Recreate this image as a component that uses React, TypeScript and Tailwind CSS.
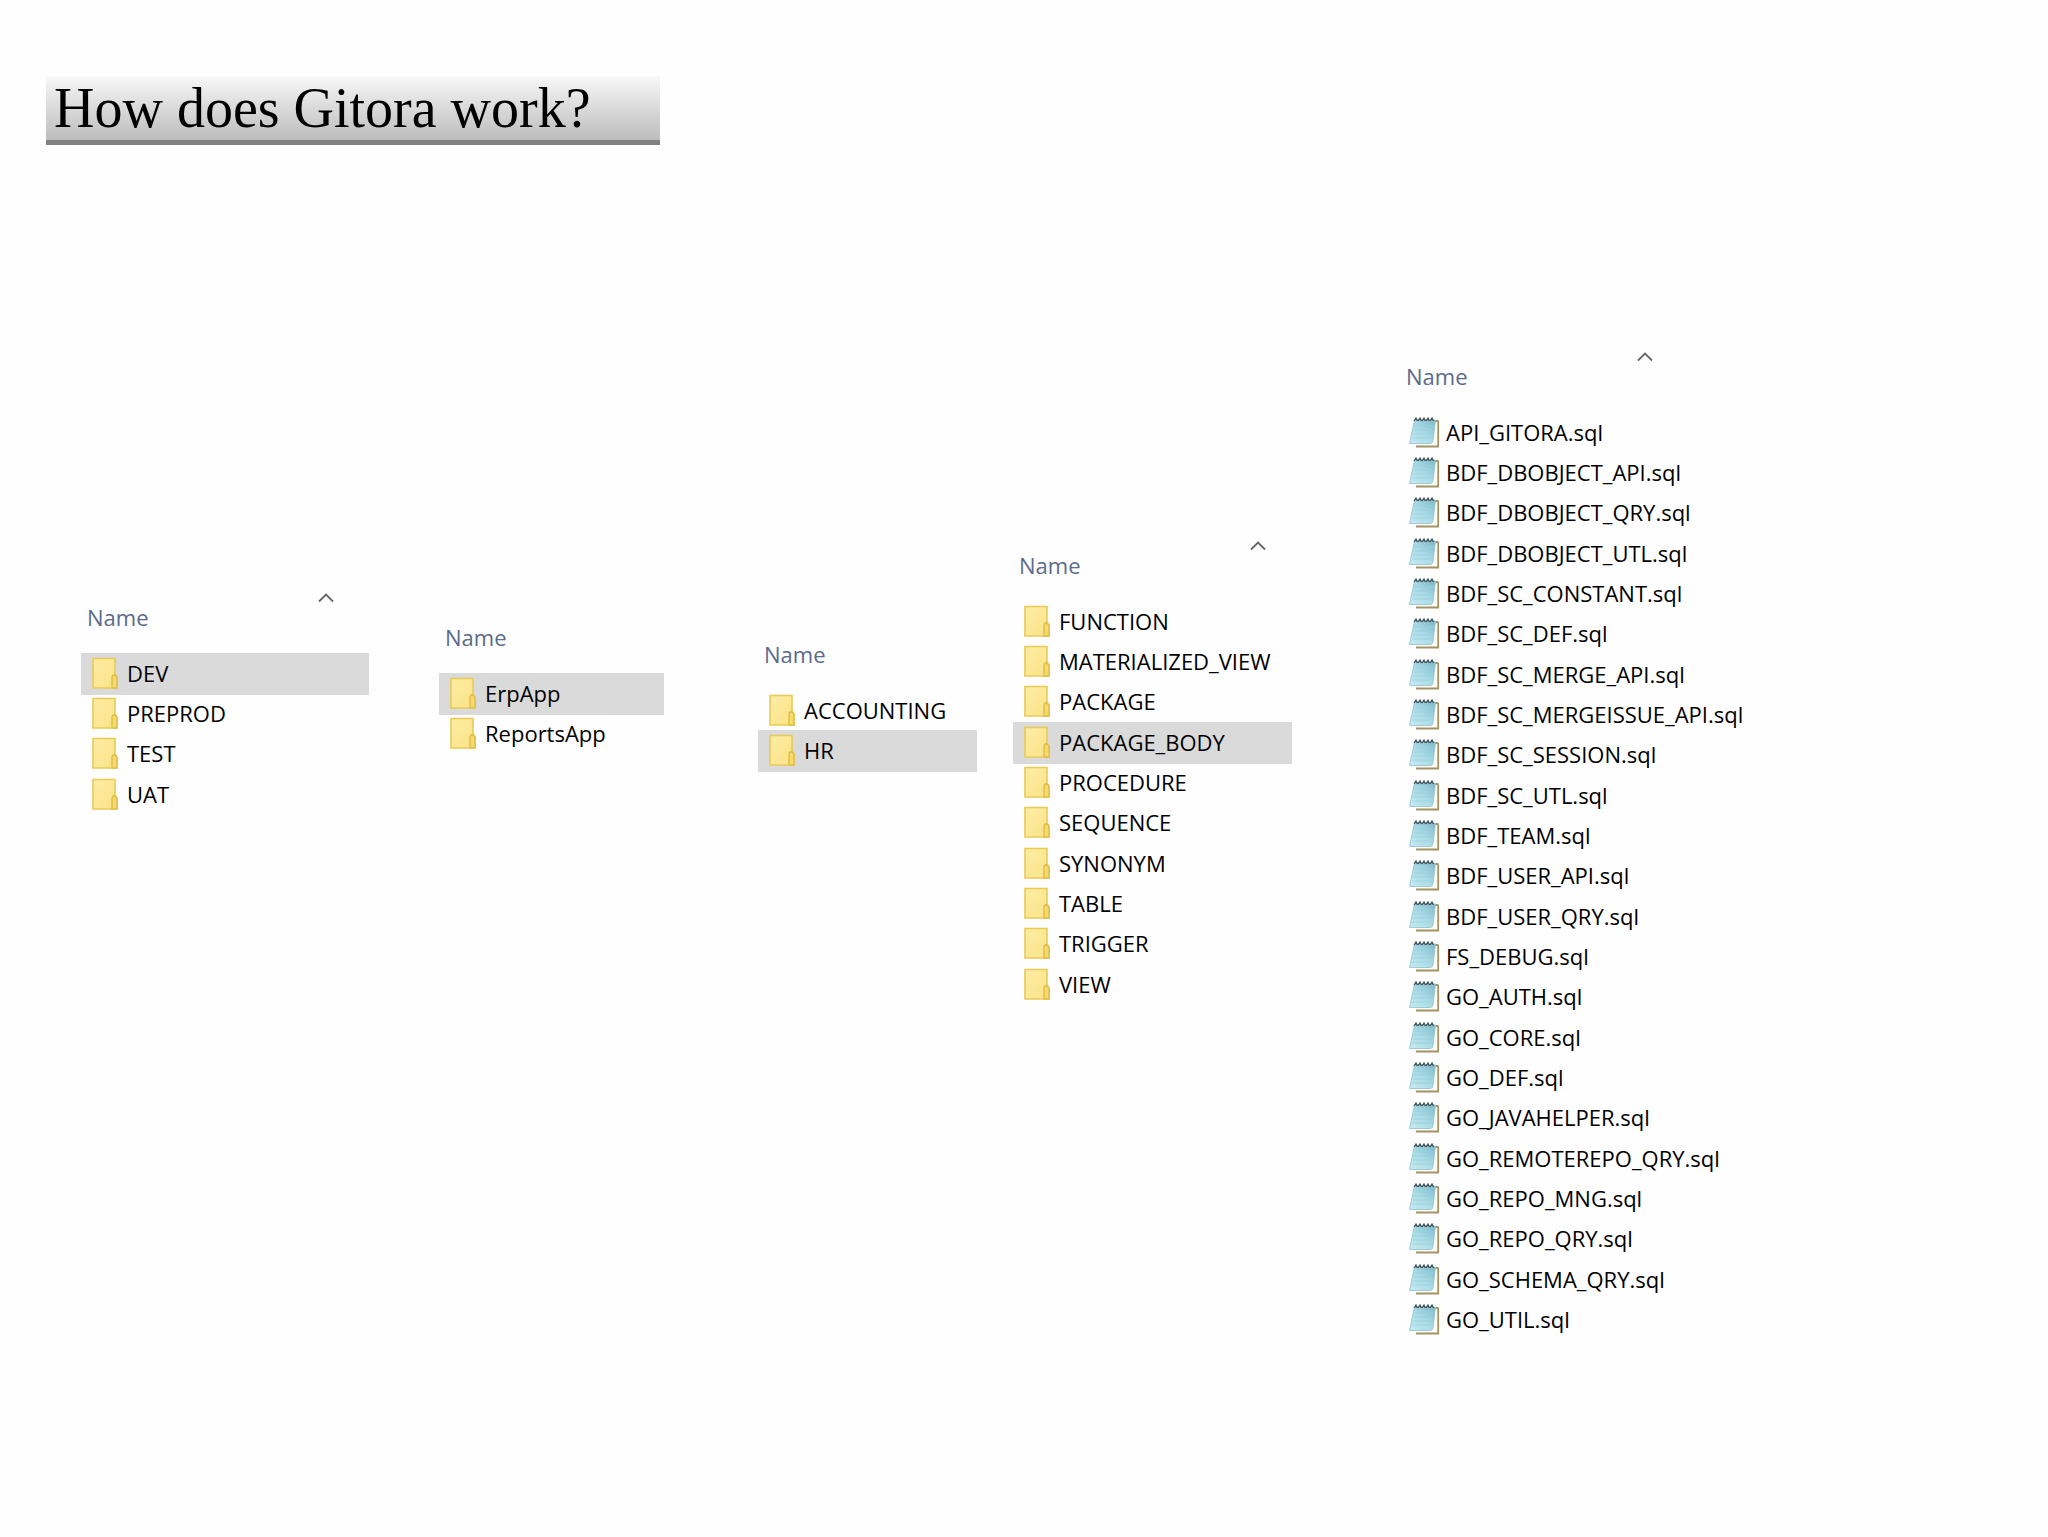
import React from "react";

type Kind = "folder" | "file";

interface PanelProps {
  items: string[];
  selected?: string;
  kind?: Kind;
  sorted?: boolean;
  className: string;
}

const environments = ["DEV", "PREPROD", "TEST", "UAT"];
const applications = ["ErpApp", "ReportsApp"];
const schemas = ["ACCOUNTING", "HR"];
const objectTypes = [
  "FUNCTION",
  "MATERIALIZED_VIEW",
  "PACKAGE",
  "PACKAGE_BODY",
  "PROCEDURE",
  "SEQUENCE",
  "SYNONYM",
  "TABLE",
  "TRIGGER",
  "VIEW",
];
const files = [
  "API_GITORA.sql",
  "BDF_DBOBJECT_API.sql",
  "BDF_DBOBJECT_QRY.sql",
  "BDF_DBOBJECT_UTL.sql",
  "BDF_SC_CONSTANT.sql",
  "BDF_SC_DEF.sql",
  "BDF_SC_MERGE_API.sql",
  "BDF_SC_MERGEISSUE_API.sql",
  "BDF_SC_SESSION.sql",
  "BDF_SC_UTL.sql",
  "BDF_TEAM.sql",
  "BDF_USER_API.sql",
  "BDF_USER_QRY.sql",
  "FS_DEBUG.sql",
  "GO_AUTH.sql",
  "GO_CORE.sql",
  "GO_DEF.sql",
  "GO_JAVAHELPER.sql",
  "GO_REMOTEREPO_QRY.sql",
  "GO_REPO_MNG.sql",
  "GO_REPO_QRY.sql",
  "GO_SCHEMA_QRY.sql",
  "GO_UTIL.sql",
];

function SharedGradients() {
  return (
    <svg className="absolute size-0" aria-hidden="true">
      <defs>
        <linearGradient id="folderFill" x1="0" y1="0" x2="1" y2="1">
          <stop offset="0" stopColor="#fdeca4" />
          <stop offset="1" stopColor="#fbe386" />
        </linearGradient>
        <linearGradient id="padFill" x1="0" y1="1" x2="1" y2="0">
          <stop offset="0" stopColor="#c8eaf1" />
          <stop offset="0.5" stopColor="#a9dbe6" />
          <stop offset="1" stopColor="#7fb9c8" />
        </linearGradient>
      </defs>
    </svg>
  );
}

function FolderIcon() {
  return (
    <svg className="h-8 w-7 shrink-0" viewBox="0 0 28 32" aria-hidden="true">
      <path d="M2 1.500h22v15.500l2 3V31H2z" fill="url(#folderFill)" stroke="#e9ca55" strokeWidth="1.600" />
      <path d="M21 31V20.500q0-2 2-3 2 1 3 3V31z" fill="#f6da6c" stroke="#dfbe48" strokeWidth="1.400" />
    </svg>
  );
}

function NotepadIcon() {
  return (
    <svg className="h-8 w-8 shrink-0" viewBox="0 0 32 32" aria-hidden="true">
      <path d="M9 5h21v25.500H8z" fill="#fdfbf2" />
      <path d="M27 5h2.500q.7 0 .7 1v24.500H8" fill="none" stroke="#a39468" strokeWidth="1.800" />
      <path d="M6.500 4H27.500L25 24.500q-.5 3-2.500 3H1.500z" fill="url(#padFill)" stroke="#8cc3cf" strokeWidth="0.800" />
      <path d="M6.500 10h18.500M6 14h18.500M5.500 18H24M4.500 22h19" stroke="#98d0dc" strokeWidth="0.800" />
      <path
        d="M6 5l2-3 1.500 3M10 5l2-3 1.500 3M14 5l2-3 1.500 3M18 5l2-3 1.500 3M22 5l2-3 1.500 3"
        fill="none"
        stroke="#42545c"
        strokeWidth="1.300"
      />
    </svg>
  );
}

function Panel({ items, selected, kind = "folder", sorted = false, className }: PanelProps) {
  return (
    <section className={`shrink-0 ${className}`}>
      <div className="relative h-14 pt-[3px]">
        <button type="button" className="block w-full pl-[6px] text-left leading-8 text-[#5b6b8c]">
          Name
        </button>
        {sorted && (
          <svg className="absolute -top-1.5 left-[237px] h-3 w-4" viewBox="0 0 16 12" fill="none" aria-hidden="true">
            <path d="M1 9.500 8 2.500l7 7" stroke="#666" strokeWidth="1.800" />
          </svg>
        )}
      </div>
      <ul>
        {items.map((name) => (
          <li key={name} className="flex h-10 items-center nth-[3n]:mb-px">
            <button
              type="button"
              aria-pressed={name === selected}
              className={`flex h-[42px] w-full shrink-0 items-center pb-0.5 text-left whitespace-nowrap text-black ${
                name === selected ? "bg-[#dadada]" : ""
              } ${kind === "folder" ? "gap-2 pl-[10px]" : "gap-[6px] pl-2"}`}
            >
              {kind === "folder" ? <FolderIcon /> : <NotepadIcon />}
              <span>{name}</span>
            </button>
          </li>
        ))}
      </ul>
    </section>
  );
}

export default function App() {
  return (
    <main className="min-h-screen overflow-hidden bg-[#fefefe] pt-[76px] font-['Open_Sans','Noto_Sans',sans-serif] text-[22px]">
      <SharedGradients />
      <h1 className="ml-[46px] w-[614px] border-b-[5px] border-[#808080] bg-linear-to-b from-[#f8f8f8] to-[#bdbdbd] pl-2 font-['Liberation_Serif',serif] text-[56px] leading-16 text-black">
        How does Gitora work?
      </h1>
      <div className="flex items-start pt-[216px] pl-[81px]">
        <Panel items={environments} selected="DEV" sorted className="mt-[237px] w-[288px]" />
        <Panel items={applications} selected="ErpApp" className="mt-[257px] ml-[70px] w-[225px]" />
        <Panel items={schemas} selected="HR" className="mt-[274px] ml-[94px] w-[219px]" />
        <Panel items={objectTypes} selected="PACKAGE_BODY" sorted className="mt-[185px] ml-[36px] w-[279px]" />
        <Panel items={files} kind="file" sorted className="-mt-1 ml-[108px] w-[360px]" />
      </div>
    </main>
  );
}
